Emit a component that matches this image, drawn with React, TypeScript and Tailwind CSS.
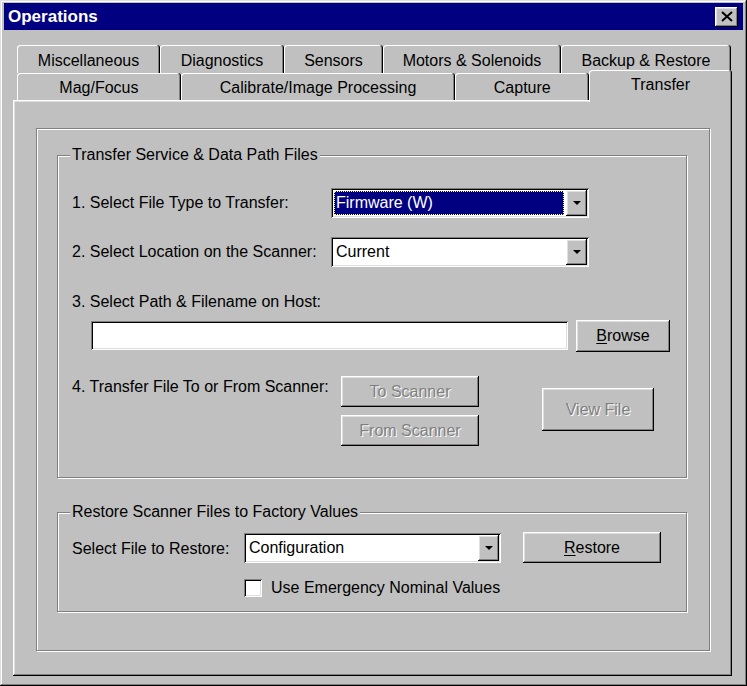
import React from "react";

const raised =
  "bg-[#c0c0c0] shadow-[inset_-1px_-1px_#000,inset_1px_1px_#fff,inset_-2px_-2px_#808080,inset_2px_2px_#dfdfdf]";
const sunken =
  "bg-white shadow-[inset_1px_1px_#808080,inset_-1px_-1px_#fff,inset_2px_2px_#000,inset_-2px_-2px_#dfdfdf]";
const etched = "border border-[#808080] shadow-[inset_1px_1px_#fff,1px_1px_#fff]";
const disabledText = "text-[#808080] [text-shadow:1px_1px_0_#fff]";
const tabShape =
  "flex items-center justify-center rounded-t-[3px] shadow-[inset_-1px_0_#000,inset_1px_1px_#fff,inset_-2px_0_#808080]";

const backRow = [
  { label: "Miscellaneous", width: "w-[143px]" },
  { label: "Diagnostics", width: "w-[124px]" },
  { label: "Sensors", width: "w-[99px]" },
  { label: "Motors & Solenoids", width: "w-[178px]" },
  { label: "Backup & Restore", width: "w-[170px]" },
];

const frontRow = [
  { label: "Mag/Focus", width: "w-[164px]" },
  { label: "Calibrate/Image Processing", width: "w-[275px]" },
  { label: "Capture", width: "w-[134px]" },
];

const DownArrow = () => (
  <svg width="8" height="4" viewBox="0 0 8 4">
    <path d="M0 0h8L4 4z" fill="#000" />
  </svg>
);

const Combo = ({
  value,
  width,
  selected,
}: {
  value: string;
  width: string;
  selected?: boolean;
}) => (
  <div className={`flex h-[30px] ${width} p-[2px] ${sunken}`}>
    <div className="flex flex-1 py-[1px] pl-[1px] pr-[2px]">
      <div
        className={`flex flex-1 items-center pl-[1px] ${
          selected
            ? "border border-dotted border-[#ffff80] bg-[#000080] text-white"
            : "border border-transparent"
        }`}
      >
        {value}
      </div>
    </div>
    <div className={`flex w-[21px] items-center justify-center ${raised}`}>
      <DownArrow />
    </div>
  </div>
);

const GroupTitle = ({ children }: { children: React.ReactNode }) => (
  <span className="absolute -top-[10px] left-[12px] bg-[#c0c0c0] px-[2px] leading-[18px]">
    {children}
  </span>
);

export default function App() {
  return (
    <div className="h-[686px] w-[747px] overflow-hidden bg-[#c0c0c0] px-[4px] pt-[3px] font-['Liberation_Sans',Arial,sans-serif] text-[16px] leading-[18px] text-black shadow-[inset_-1px_-1px_#000,inset_1px_1px_#dfdfdf,inset_-2px_-2px_#808080,inset_2px_2px_#fff]">
      {/* title bar */}
      <div className="flex h-[27px] items-center justify-between bg-[#000080] pl-[4px] pr-[5px]">
        <span className="text-[17px] font-bold text-white">Operations</span>
        <button className={`flex h-[20px] w-[23px] items-center justify-center ${raised}`}>
          <svg width="12" height="11" viewBox="0 0 12 11">
            <path d="M1 1L11 10M11 1L1 10" stroke="#000" strokeWidth="2" />
          </svg>
        </button>
      </div>

      <div className="ml-[9px] mt-[15px] w-[719px]">
        {/* tabs */}
        <div className="flex h-[28px] pl-[4px]">
          {backRow.map((t) => (
            <div key={t.label} className={`${t.width} ${tabShape} pt-[3px]`}>
              {t.label}
            </div>
          ))}
        </div>
        <div className="flex h-[27px] pl-[4px]">
          {frontRow.map((t) => (
            <div key={t.label} className={`${t.width} ${tabShape} bg-[#c0c0c0] pt-[2px]`}>
              {t.label}
            </div>
          ))}
          <div className={`relative z-10 -mb-[2px] -mt-[3px] w-[143px] bg-[#c0c0c0] ${tabShape} pb-[3px]`}>
            Transfer
          </div>
        </div>

        {/* tab panel */}
        <div className="h-[576px] pb-[25px] pl-[23px] pr-[22px] pt-[28px] shadow-[inset_-1px_-1px_#000,inset_1px_1px_#fff,inset_-2px_-2px_#808080,inset_2px_2px_#dfdfdf]">
          <div className={`h-full pl-[20px] pt-[26px] ${etched}`}>
            {/* transfer group */}
            <div className={`relative h-[323px] w-[630px] pl-[14px] pt-[32px] ${etched}`}>
              <GroupTitle>Transfer Service &amp; Data Path Files</GroupTitle>
              <div className="flex h-[30px] items-center">
                <span className="w-[259px]">1. Select File Type to Transfer:</span>
                <Combo value="Firmware (W)" width="w-[258px]" selected />
              </div>
              <div className="mt-[19px] flex h-[30px] items-center">
                <span className="w-[259px]">2. Select Location on the Scanner:</span>
                <Combo value="Current" width="w-[258px]" />
              </div>
              <div className="mt-[26px]">3. Select Path &amp; Filename on Host:</div>
              <div className="mt-[9px] flex items-start pl-[19px]">
                <div className={`mt-[1px] h-[29px] w-[477px] ${sunken}`} />
                <button className={`ml-[8px] h-[32px] w-[94px] ${raised}`}>
                  <span className="underline underline-offset-2">B</span>rowse
                </button>
              </div>
              <div className="mt-[24px] flex items-start">
                <span className="mt-[2px] w-[269px]">4. Transfer File To or From Scanner:</span>
                <div className="flex flex-col gap-[8px]">
                  <button className={`h-[31px] w-[138px] ${raised} ${disabledText}`}>To Scanner</button>
                  <button className={`h-[31px] w-[138px] ${raised} ${disabledText}`}>From Scanner</button>
                </div>
                <button className={`ml-[63px] mt-[12px] h-[43px] w-[112px] ${raised} ${disabledText}`}>
                  View File
                </button>
              </div>
            </div>

            {/* restore group */}
            <div className={`relative mt-[34px] h-[100px] w-[630px] pl-[14px] pt-[19px] ${etched}`}>
              <GroupTitle>Restore Scanner Files to Factory Values</GroupTitle>
              <div className="flex items-start">
                <span className="mt-[8px] w-[172px]">Select File to Restore:</span>
                <div className="mt-[1px]">
                  <Combo value="Configuration" width="w-[257px]" />
                </div>
                <button className={`ml-[22px] h-[31px] w-[138px] ${raised}`}>
                  <span className="underline underline-offset-2">R</span>estore
                </button>
              </div>
              <div className="mt-[16px] flex items-center pl-[172px]">
                <div className={`h-[18px] w-[18px] ${sunken}`} />
                <span className="ml-[9px]">Use Emergency Nominal Values</span>
              </div>
            </div>
          </div>
        </div>
      </div>
    </div>
  );
}
